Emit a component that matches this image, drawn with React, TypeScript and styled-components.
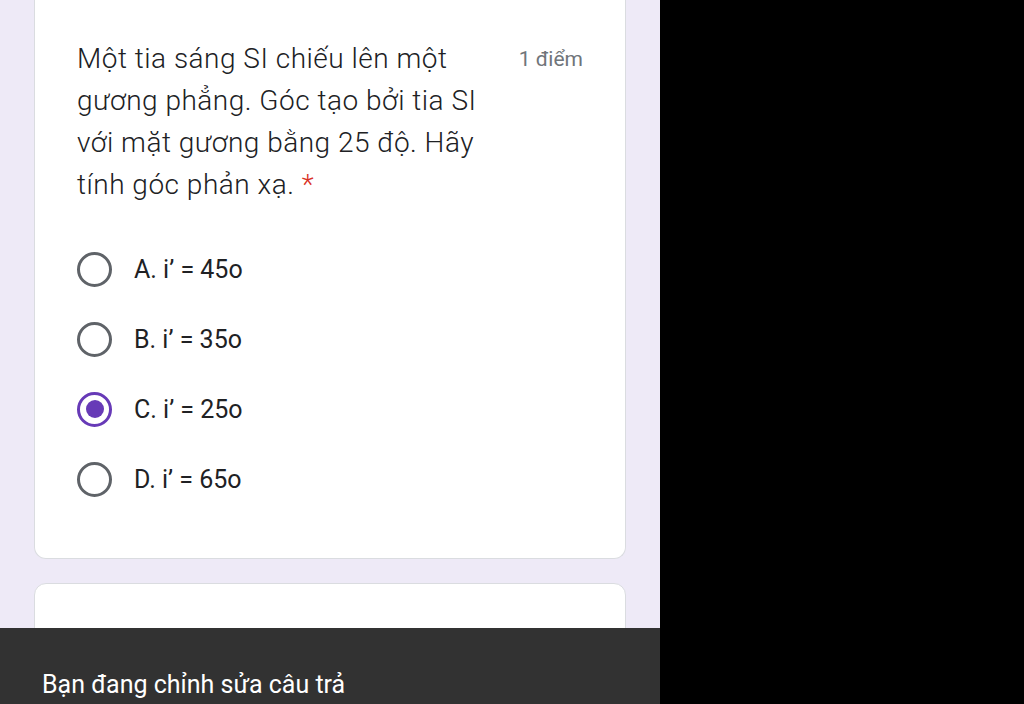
import styled, { createGlobalStyle } from 'styled-components';

const GlobalStyle = createGlobalStyle`
  html, body {
    margin: 0;
    padding: 0;
    background: #000;
  }
  body {
    font-family: Roboto, "Liberation Sans", sans-serif;
  }
`;

const options = [
  { id: 'a', label: 'A. i’ = 45o' },
  { id: 'b', label: 'B. i’ = 35o' },
  { id: 'c', label: 'C. i’ = 25o' },
  { id: 'd', label: 'D. i’ = 65o' },
];

export default function App() {
  const selected = 'c';

  return (
    <>
      <GlobalStyle />
      <Screen>
        <FormColumn>
          <QuestionCard>
            <QuestionHeader>
              <QuestionTitle>
                Một tia sáng SI chiếu lên một gương phẳng. Góc tạo bởi tia SI với mặt gương
                bằng 25 độ. Hãy tính góc phản xạ. <Required>*</Required>
              </QuestionTitle>
              <Points>1 điểm</Points>
            </QuestionHeader>
            <OptionList>
              {options.map((o) => (
                <OptionRow key={o.id}>
                  <Radio checked={o.id === selected} />
                  <OptionLabel>{o.label}</OptionLabel>
                </OptionRow>
              ))}
            </OptionList>
          </QuestionCard>
          <NextCard />
          <Snackbar>
            <SnackText>Bạn đang chỉnh sửa câu trả lời của mình. Để hủy bỏ thay đổi</SnackText>
          </Snackbar>
        </FormColumn>
        <BlackArea />
      </Screen>
    </>
  );
}

const Screen = styled.div`
  display: flex;
  width: 1024px;
  height: 704px;
  overflow: hidden;
`;

const FormColumn = styled.div`
  position: relative;
  width: 660px;
  height: 704px;
  background: #eeeaf7;
  padding: 0 34px;
  box-sizing: border-box;
  display: flex;
  flex-direction: column;
  gap: 24px;
  overflow: hidden;
  flex-shrink: 0;
`;

const BlackArea = styled.div`
  flex: 1;
  background: #000;
`;

const QuestionCard = styled.div`
  background: #fff;
  border: 1px solid #dadce0;
  border-top: none;
  border-radius: 0 0 12px 12px;
  padding: 38px 42px 42px 42px;
  box-sizing: border-box;
  height: 559px;
  flex-shrink: 0;
`;

const QuestionHeader = styled.div`
  display: flex;
  justify-content: space-between;
  align-items: flex-start;
`;

const QuestionTitle = styled.div`
  width: 420px;
  font-size: 28px;
  font-weight: 300;
  letter-spacing: 0.5px;
  line-height: 42px;
  color: #202124;
`;

const Required = styled.span`
  color: #d93025;
`;

const Points = styled.div`
  font-size: 21px;
  line-height: 42px;
  color: #70757a;
`;

const OptionList = styled.div`
  display: flex;
  flex-direction: column;
  gap: 36px;
  margin-top: 46px;
`;

const OptionRow = styled.div`
  display: flex;
  align-items: center;
  gap: 22px;
  height: 34px;
`;

const Radio = styled.div<{ checked?: boolean }>`
  width: 35px;
  height: 35px;
  border-radius: 50%;
  box-sizing: border-box;
  border: 3px solid ${({ checked }) => (checked ? '#673ab7' : '#5f6368')};
  display: flex;
  align-items: center;
  justify-content: center;
  flex-shrink: 0;

  &::after {
    content: '';
    display: ${({ checked }) => (checked ? 'block' : 'none')};
    width: 18px;
    height: 18px;
    border-radius: 50%;
    background: #673ab7;
  }
`;

const OptionLabel = styled.span`
  font-size: 25px;
  color: #202124;
`;

const NextCard = styled.div`
  background: #fff;
  border: 1px solid #dadce0;
  border-radius: 12px;
  height: 200px;
  flex-shrink: 0;
`;

const Snackbar = styled.div`
  position: absolute;
  left: 0;
  right: 0;
  top: 628px;
  height: 120px;
  background: #323232;
  padding: 40px 42px 0 42px;
  box-sizing: border-box;
`;

const SnackText = styled.div`
  width: 330px;
  font-size: 25px;
  line-height: 34px;
  color: #fff;
`;
